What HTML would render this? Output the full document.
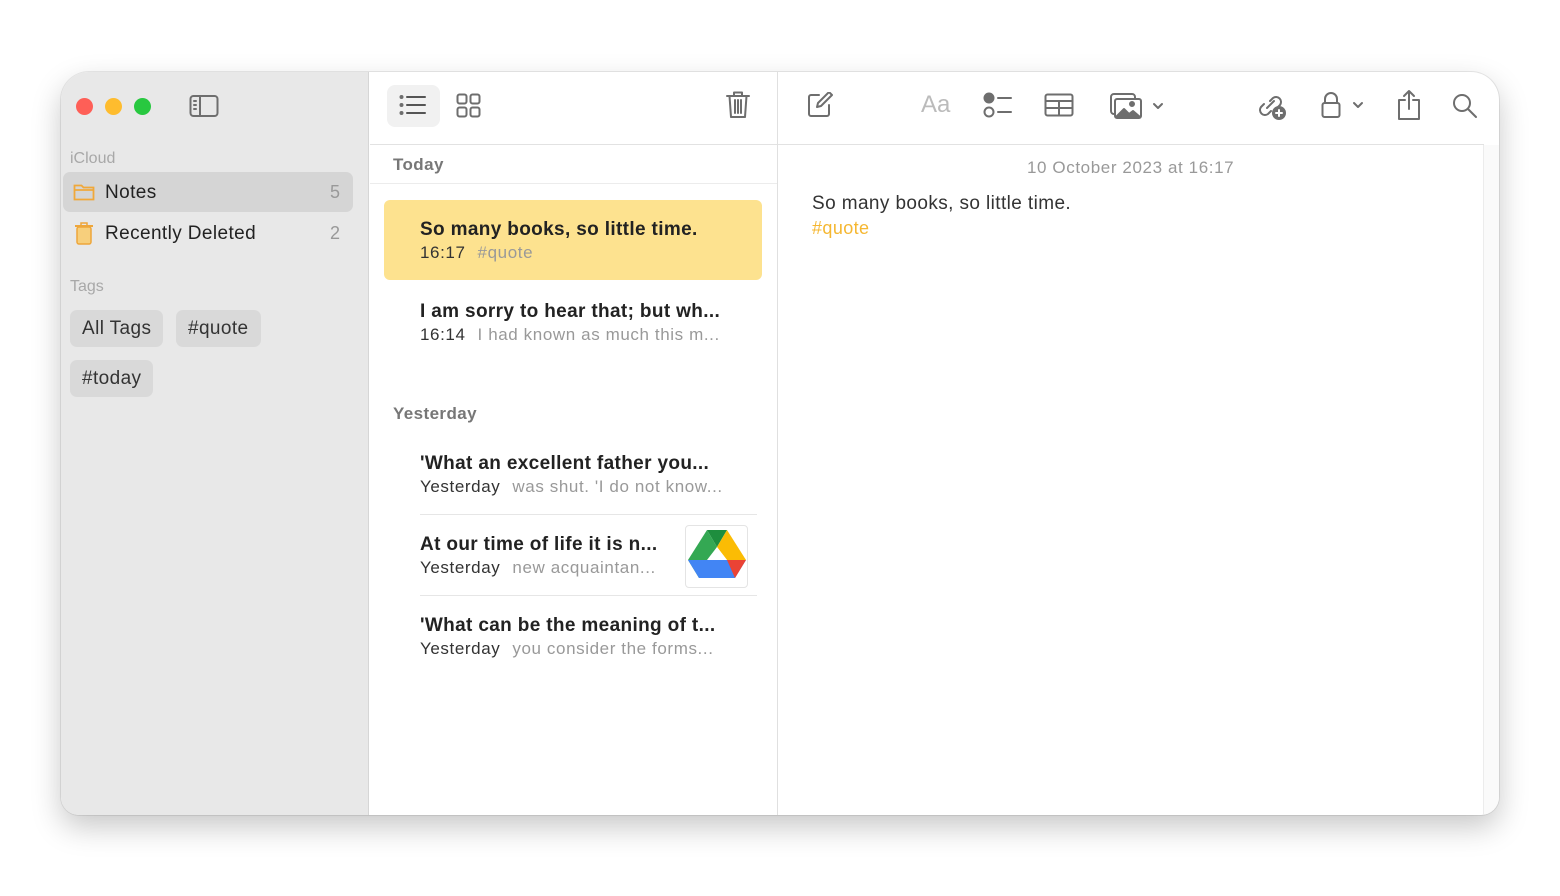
<!DOCTYPE html>
<html><head><meta charset="utf-8"><style>
*{margin:0;padding:0;box-sizing:border-box}
body{width:1560px;height:896px;background:#fff;font-family:"Liberation Sans",sans-serif;position:relative;overflow:hidden}
.win{position:absolute;left:61px;top:72px;width:1438px;height:743px;border-radius:28px 28px 18px 18px;background:#fff;overflow:hidden;box-shadow:0 12px 30px rgba(0,0,0,0.22),0 0 0 1px rgba(0,0,0,0.08)}
.side{position:absolute;left:0;top:0;width:308px;height:743px;background:#e8e8e8;border-right:1px solid #d6d6d6}
.a{position:absolute;white-space:nowrap}
.dot{position:absolute;top:26px;width:17px;height:17px;border-radius:50%}
.tag{position:absolute;height:37px;background:#d9d9d9;border-radius:7px;font-size:19px;color:#333;line-height:37px;padding:0 12px;letter-spacing:0.4px}
.ic{position:absolute;stroke:#6e6e6e;fill:none;stroke-width:2;stroke-linecap:round;stroke-linejoin:round}
.t{font-weight:bold;font-size:19px;color:#222;letter-spacing:0.35px}
.s{font-size:17px;color:#999;letter-spacing:0.6px}
.s b{font-weight:normal;color:#333;margin-right:12px}
.sep{position:absolute;height:1px;background:#e6e6e6}
</style></head><body>
<div class="win">
 <div class="side">
  <div class="dot" style="left:15px;background:#fe5f57"></div>
  <div class="dot" style="left:44px;background:#febc2e"></div>
  <div class="dot" style="left:73px;background:#28c840"></div>
  <svg class="ic" style="left:128px;top:22px" width="30" height="24" viewBox="0 0 30 24"><rect x="1.5" y="2" width="27" height="20" rx="3"/><line x1="11" y1="2" x2="11" y2="22"/><line x1="5" y1="7" x2="7" y2="7"/><line x1="5" y1="11" x2="7" y2="11"/><line x1="5" y1="15" x2="7" y2="15"/></svg>
  <div class="a" style="left:9px;top:78px;font-size:16px;color:#a8a8a8">iCloud</div>
  <div class="a" style="left:2px;top:100px;width:290px;height:40px;background:#d5d5d5;border-radius:7px"></div>
  <svg class="a" style="left:12px;top:110px" width="22" height="20" viewBox="0 0 22 20"><path d="M1.5 3.5h7l2 2h10v12h-19z" fill="none" stroke="#f0a83a" stroke-width="1.8"/><line x1="1.5" y1="8" x2="20.5" y2="8" stroke="#f0a83a" stroke-width="1.8"/></svg>
  <div class="a" style="left:44px;top:110px;font-size:19px;color:#222;letter-spacing:0.4px">Notes</div>
  <div class="a" style="left:269px;top:110px;font-size:18px;color:#999">5</div>
  <svg class="a" style="left:13px;top:150px" width="20" height="23" viewBox="0 0 20 23"><rect x="3" y="5" width="14" height="17" rx="2" fill="#f7cf7c" stroke="#eea63a" stroke-width="1.5"/><line x1="1" y1="4" x2="19" y2="4" stroke="#eea63a" stroke-width="2"/><rect x="7" y="1" width="6" height="3" fill="none" stroke="#eea63a" stroke-width="1.5"/></svg>
  <div class="a" style="left:44px;top:151px;font-size:19px;color:#222;letter-spacing:0.4px">Recently Deleted</div>
  <div class="a" style="left:269px;top:151px;font-size:18px;color:#999">2</div>
  <div class="a" style="left:9px;top:206px;font-size:16px;color:#a8a8a8">Tags</div>
  <div class="tag" style="left:9px;top:238px">All Tags</div>
  <div class="tag" style="left:115px;top:238px">#quote</div>
  <div class="tag" style="left:9px;top:288px">#today</div>
 </div>
 <div class="a" style="left:326px;top:13px;width:53px;height:42px;background:#f1f1f1;border-radius:8px"></div>
 <svg class="ic" style="left:338px;top:22px" width="28" height="22" viewBox="0 0 28 22"><circle cx="2.5" cy="3" r="1" fill="#555"/><circle cx="2.5" cy="11" r="1" fill="#555"/><circle cx="2.5" cy="19" r="1" fill="#555"/><line x1="8" y1="3" x2="26" y2="3" stroke="#555"/><line x1="8" y1="11" x2="26" y2="11" stroke="#555"/><line x1="8" y1="19" x2="26" y2="19" stroke="#555"/></svg>
 <svg class="ic" style="left:395px;top:21px" width="26" height="26" viewBox="0 0 26 26"><rect x="1.5" y="1.5" width="9" height="9" rx="2"/><rect x="14.5" y="1.5" width="9" height="9" rx="2"/><rect x="1.5" y="14.5" width="9" height="9" rx="2"/><rect x="14.5" y="14.5" width="9" height="9" rx="2"/></svg>
 <svg class="ic" style="left:664px;top:18px" width="26" height="30" viewBox="0 0 26 30"><line x1="2" y1="6" x2="24" y2="6"/><path d="M9 6V2.5h8V6"/><path d="M4.5 6l1.5 21h14l1.5-21"/><line x1="10" y1="10" x2="10" y2="23"/><line x1="13" y1="10" x2="13" y2="23"/><line x1="16" y1="10" x2="16" y2="23"/></svg>
 <div class="sep" style="left:309px;top:72px;width:1114px;background:#e2e2e2"></div>
 <div class="a" style="left:332px;top:83px;font-size:17px;color:#777;font-weight:bold;letter-spacing:0.4px">Today</div>
 <div class="sep" style="left:309px;top:111px;width:408px;background:#ececec"></div>
 <div class="a" style="left:323px;top:128px;width:378px;height:80px;background:#fde28f;border-radius:6px"></div>
 <div class="a t" style="left:359px;top:147px">So many books, so little time.</div>
 <div class="a s" style="left:359px;top:171px"><b>16:17</b>#quote</div>
 <div class="a t" style="left:359px;top:229px">I am sorry to hear that; but wh...</div>
 <div class="a s" style="left:359px;top:253px"><b>16:14</b>I had known as much this m...</div>
 <div class="a" style="left:332px;top:332px;font-size:17px;color:#777;font-weight:bold;letter-spacing:0.4px">Yesterday</div>
 <div class="a t" style="left:359px;top:381px">'What an excellent father you...</div>
 <div class="a s" style="left:359px;top:405px"><b>Yesterday</b>was shut. 'I do not know...</div>
 <div class="sep" style="left:359px;top:442px;width:337px"></div>
 <div class="a t" style="left:359px;top:462px">At our time of life it is n...</div>
 <div class="a s" style="left:359px;top:486px"><b>Yesterday</b>new acquaintan...</div>
 <div class="a" style="left:624px;top:453px;width:63px;height:63px;border:1px solid #e4e4e4;border-radius:4px;background:#fff"></div>
 <svg class="a" style="left:626px;top:456px" width="60" height="56" viewBox="0 0 60 56"><polygon points="20,2 40,2 30,19" fill="#1e8e3e"/><polygon points="20,2 30,19 12,50 1,32" fill="#34a853"/><polygon points="40,2 59,32 40,32 30,19" fill="#fbbc04"/><polygon points="1,32 59,32 48,50 12,50" fill="#4285f4"/><polygon points="40,32 59,32 48,50" fill="#ea4335"/><polygon points="20,32 40,32 30,19" fill="#fff"/></svg>
 <div class="sep" style="left:359px;top:523px;width:337px"></div>
 <div class="a t" style="left:359px;top:543px">'What can be the meaning of t...</div>
 <div class="a s" style="left:359px;top:567px"><b>Yesterday</b>you consider the forms...</div>
 <div class="a" style="left:716px;top:0;width:1px;height:743px;background:#e0e0e0"></div>
 <svg class="ic" style="left:746px;top:20px" width="26" height="26" viewBox="0 0 26 26"><path d="M12 3H4a2 2 0 0 0-2 2v17a2 2 0 0 0 2 2h16a2 2 0 0 0 2-2v-9"/><path d="M10 15l1-4 11-11 3 3-11 11z"/></svg>
 <div class="a" style="left:860px;top:19px;font-size:24px;color:#bbb">Aa</div>
 <svg class="ic" style="left:922px;top:20px" width="30" height="26" viewBox="0 0 30 26"><circle cx="6" cy="6" r="4.5" fill="#6e6e6e"/><circle cx="6" cy="20" r="4.5"/><line x1="15" y1="6" x2="28" y2="6"/><line x1="15" y1="20" x2="28" y2="20"/></svg>
 <svg class="ic" style="left:983px;top:21px" width="30" height="24" viewBox="0 0 30 24"><rect x="1.5" y="1.5" width="27" height="21" rx="2"/><line x1="1.5" y1="8" x2="28.5" y2="8"/><line x1="1.5" y1="15" x2="28.5" y2="15"/><line x1="15" y1="8" x2="15" y2="22.5"/></svg>
 <svg class="ic" style="left:1048px;top:20px" width="58" height="28" viewBox="0 0 58 28"><rect x="2" y="2" width="24" height="20" rx="3"/><rect x="6" y="7" width="26" height="19" rx="2" fill="#fff"/><path d="M7 25l8-8 5 5 4-3 7 6z" fill="#6e6e6e"/><circle cx="23" cy="12" r="2" fill="#6e6e6e"/><path d="M45 12l4 4 4-4"/></svg>
 <svg class="ic" style="left:1196px;top:19px" width="30" height="30" viewBox="0 0 30 30"><path d="M13 10l3-3a5 5 0 0 1 7 7l-2 2"/><path d="M14 20l-3 3a5 5 0 0 1-7-7l3-3"/><path d="M10 17l7-7"/><circle cx="22" cy="22" r="6" fill="#6e6e6e"/><path d="M22 19v6M19 22h6" stroke="#fff"/></svg>
 <svg class="ic" style="left:1260px;top:19px" width="48" height="28" viewBox="0 0 48 28"><path d="M4 12V8a6 6 0 0 1 12 0v4"/><rect x="1.5" y="12" width="17" height="14" rx="2"/><path d="M33 12l4 4 4-4"/></svg>
 <svg class="ic" style="left:1335px;top:17px" width="26" height="32" viewBox="0 0 26 32"><path d="M9 11H3v19h20V11h-6"/><path d="M13 2v18M8 7l5-5 5 5"/></svg>
 <svg class="ic" style="left:1391px;top:21px" width="26" height="26" viewBox="0 0 26 26"><circle cx="10" cy="10" r="8"/><line x1="16" y1="16" x2="24" y2="24"/></svg>
 <div class="a" style="left:966px;top:86px;font-size:17px;color:#999;letter-spacing:0.6px">10 October 2023 at 16:17</div>
 <div class="a" style="left:751px;top:121px;font-size:19px;color:#333;letter-spacing:0.4px">So many books, so little time.</div>
 <div class="a" style="left:751px;top:146px;font-size:18px;color:#f5b731;letter-spacing:0.4px">#quote</div>
 <div class="a" style="left:1422px;top:73px;width:16px;height:670px;background:#fafafa;border-left:1px solid #ececec"></div>
</div>
</body></html>
